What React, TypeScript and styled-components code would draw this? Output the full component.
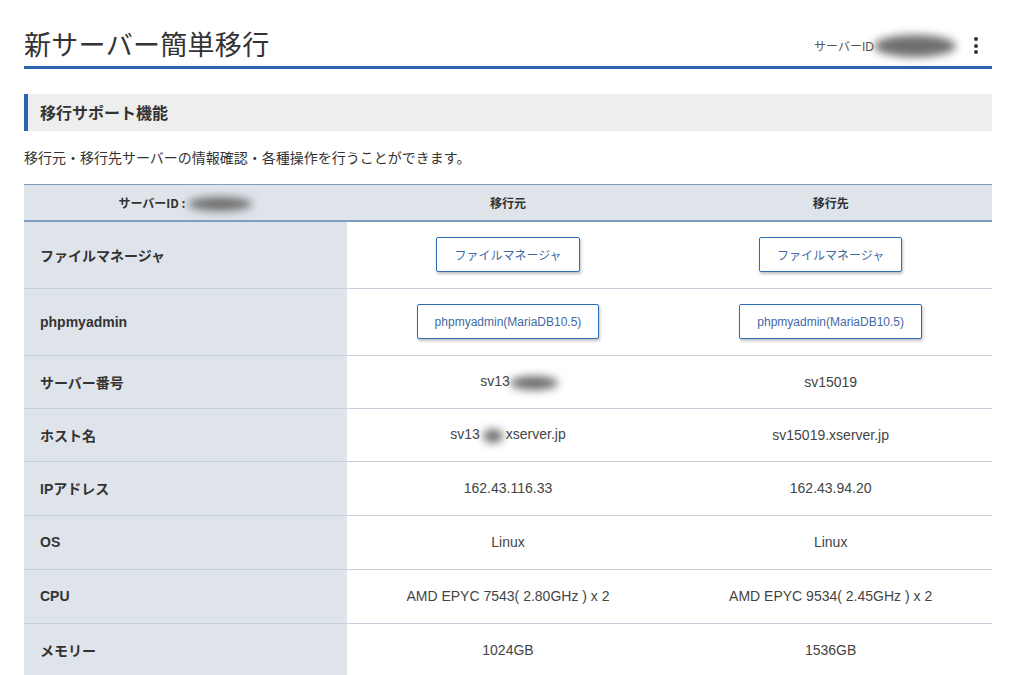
import React from "react";
import styled, { createGlobalStyle } from "styled-components";

const GlobalStyle = createGlobalStyle`
  body {
    margin: 0;
    background: #ffffff;
    font-family: "Liberation Sans", Arial, "Noto Sans CJK JP", sans-serif;
    color: #333333;
  }
`;

const Page = styled.div`
  width: 968px;
  margin-left: 24px;
`;

const Header = styled.header`
  display: flex;
  align-items: center;
  justify-content: space-between;
  height: 42px;
  padding-top: 22px;
  padding-bottom: 2px;
  border-bottom: 3px solid #2a65ac;
`;

const Title = styled.h1`
  margin: 0;
  font-size: 27px;
  font-weight: 400;
  color: #333333;
  letter-spacing: 0.3px;
  font-family: "Noto Sans CJK JP", sans-serif;
`;

const ServerIdBox = styled.div`
  display: flex;
  align-items: center;
  font-size: 12px;
  color: #555555;
  padding-top: 5px;
`;

const Blur = styled.span<{ $w: number; $h?: number }>`
  display: inline-block;
  width: ${({ $w }) => $w}px;
  height: ${({ $h }) => $h ?? 14}px;
  background: #6f6f6f;
  border-radius: 50%;
  filter: blur(4px);
  vertical-align: middle;
`;

const Kebab = styled.span`
  display: flex;
  flex-direction: column;
  gap: 2.5px;
  margin-left: 18px;
  margin-right: 14px;
  & > i {
    width: 4px;
    height: 4px;
    border-radius: 50%;
    background: #333333;
  }
`;

const SectionTitle = styled.h2`
  margin: 25px 0 0;
  height: 37px;
  display: flex;
  align-items: center;
  background: #eeeeee;
  border-left: 4px solid #2a65ac;
  padding-left: 12px;
  padding-bottom: 2px;
  box-sizing: border-box;
  font-size: 16px;
  font-weight: 700;
  color: #333333;
  font-family: "Noto Sans CJK JP", sans-serif;
`;

const Description = styled.p`
  margin: 16px 0 16px;
  font-size: 14px;
  line-height: 21px;
  color: #333333;
  font-family: "Noto Sans CJK JP", sans-serif;
`;

const Table = styled.table`
  width: 100%;
  border-collapse: collapse;
  table-layout: fixed;
  font-size: 14px;

  tbody tr + tr > * {
    border-top: 1px solid #c5d0dc;
  }
`;

const HeadCell = styled.th`
  height: 35px;
  padding: 0;
  background: #dfe4eb;
  border-top: 1px solid #7f9dbf;
  border-bottom: 2px solid #7f9dbf;
  font-size: 12px;
  font-weight: 700;
  color: #333333;
  text-align: center;
  font-family: "Noto Sans CJK JP", sans-serif;
`;

const Row = styled.tr<{ $h: number }>`
  height: ${({ $h }) => $h}px;
`;

const Label = styled.th`
  background: #dfe4eb;
  text-align: left;
  padding: 0 0 0 16px;
  font-size: 14px;
  font-weight: 700;
  color: #333333;
  font-family: "Liberation Sans", Arial, "Noto Sans CJK JP", sans-serif;
`;

const Value = styled.td`
  padding: 0;
  text-align: center;
  font-size: 14px;
  color: #444444;
  white-space: nowrap;
`;

const LinkButton = styled.button`
  height: 35px;
  padding: 0 17px;
  background: #ffffff;
  border: 1px solid #2f6db5;
  border-radius: 2px;
  box-shadow: 1px 2px 3px rgba(0, 0, 0, 0.25);
  color: #4369a5;
  font-size: 12px;
  font-family: "Liberation Sans", Arial, "Noto Sans CJK JP", sans-serif;
  cursor: pointer;
`;

type Cell = React.ReactNode;

const rows: { label: string; h: number; src: Cell; dst: Cell }[] = [
  {
    label: "ファイルマネージャ",
    h: 67,
    src: <LinkButton>ファイルマネージャ</LinkButton>,
    dst: <LinkButton>ファイルマネージャ</LinkButton>,
  },
  {
    label: "phpmyadmin",
    h: 67,
    src: <LinkButton>phpmyadmin(MariaDB10.5)</LinkButton>,
    dst: <LinkButton>phpmyadmin(MariaDB10.5)</LinkButton>,
  },
  {
    label: "サーバー番号",
    h: 53,
    src: (
      <>
        sv13
        <Blur $w={48} $h={14} style={{ marginRight: -22 }} />
      </>
    ),
    dst: "sv15019",
  },
  {
    label: "ホスト名",
    h: 53,
    src: (
      <>
        sv13
        <Blur $w={20} $h={14} style={{ margin: "0 3px" }} />
        xserver.jp
      </>
    ),
    dst: "sv15019.xserver.jp",
  },
  { label: "IPアドレス", h: 54, src: "162.43.116.33", dst: "162.43.94.20" },
  { label: "OS", h: 54, src: "Linux", dst: "Linux" },
  {
    label: "CPU",
    h: 54,
    src: "AMD EPYC 7543( 2.80GHz ) x 2",
    dst: "AMD EPYC 9534( 2.45GHz ) x 2",
  },
  { label: "メモリー", h: 54, src: "1024GB", dst: "1536GB" },
];

export default function App() {
  return (
    <Page>
      <GlobalStyle />
      <Header>
        <Title>新サーバー簡単移行</Title>
        <ServerIdBox>
          サーバーID
          <Blur $w={82} $h={22} />
          <Kebab>
            <i />
            <i />
            <i />
          </Kebab>
        </ServerIdBox>
      </Header>
      <SectionTitle>移行サポート機能</SectionTitle>
      <Description>
        移行元・移行先サーバーの情報確認・各種操作を行うことができます。
      </Description>
      <Table>
        <thead>
          <tr>
            <HeadCell>
              サーバーID : <Blur $w={64} $h={14} />
            </HeadCell>
            <HeadCell>移行元</HeadCell>
            <HeadCell>移行先</HeadCell>
          </tr>
        </thead>
        <tbody>
          {rows.map((r) => (
            <Row key={r.label} $h={r.h}>
              <Label>{r.label}</Label>
              <Value>{r.src}</Value>
              <Value>{r.dst}</Value>
            </Row>
          ))}
        </tbody>
      </Table>
    </Page>
  );
}
